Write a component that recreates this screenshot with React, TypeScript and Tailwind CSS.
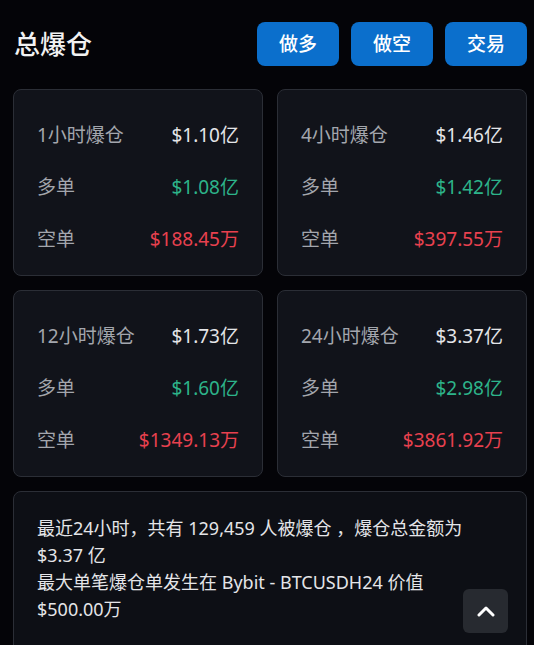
import * as React from 'react';

interface Stat {
    label: string;
    total: string;
    long: string;
    short: string;
}

const stats: Stat[] = [
    { label: '1小时爆仓', total: '$1.10亿', long: '$1.08亿', short: '$188.45万' },
    { label: '4小时爆仓', total: '$1.46亿', long: '$1.42亿', short: '$397.55万' },
    { label: '12小时爆仓', total: '$1.73亿', long: '$1.60亿', short: '$1349.13万' },
    { label: '24小时爆仓', total: '$3.37亿', long: '$2.98亿', short: '$3861.92万' },
];

function StatCard(props: { stat: Stat }) {
    const { stat } = props;

    return (
        <div className="h-[187px] rounded-lg border border-[#2b2e36] bg-[#11131a] px-[23px] pt-[28px] text-[19px]">
            <div className="flex h-[34px] items-center justify-between">
                <span className="text-[#a3a6ad]">{stat.label}</span>
                <span className="text-[#e4e5e8]">{stat.total}</span>
            </div>

            <div className="mt-[18px] flex h-[34px] items-center justify-between">
                <span className="text-[#a3a6ad]">多单</span>
                <span className="text-[#2db48a]">{stat.long}</span>
            </div>

            <div className="mt-[18px] flex h-[34px] items-center justify-between">
                <span className="text-[#a3a6ad]">空单</span>
                <span className="text-[#e8414f]">{stat.short}</span>
            </div>
        </div>
    );
}

export default function App() {
    return (
        <div
            className="relative h-[645px] w-[534px] overflow-hidden bg-[#040408] px-[13px]"
            style={{ fontFamily: '"Noto Sans", "Noto Sans CJK SC", sans-serif' }}
        >
            <div className="-mr-[6px] flex h-[89px] items-center justify-between pb-[1px]">
                <span className="pl-[1px] text-[26px] font-medium text-[#f2f2f2]">总爆仓</span>

                <div className="flex gap-3">
                    {['做多', '做空', '交易'].map((t) => (
                        <button
                            key={t}
                            className="h-[44px] w-[82px] rounded-lg bg-[#0b6fcc] text-[19px] font-medium text-white"
                        >
                            {t}
                        </button>
                    ))}
                </div>
            </div>

            <div className="grid w-[514px] grid-cols-2 gap-x-[14px] gap-y-[14px]">
                {stats.map((s) => (
                    <StatCard stat={s} key={s.label} />
                ))}
            </div>

            <div className="mt-[14px] h-[200px] w-[514px] rounded-lg border border-[#2b2e36] bg-[#0d0f15] px-[23px] pt-[23px] text-[18px] leading-[27px] text-[#e4e5e8]">
                <p>最近24小时，共有 129,459 人被爆仓 ，爆仓总金额为</p>
                <p>$3.37 亿</p>
                <p>最大单笔爆仓单发生在 Bybit - BTCUSDH24 价值</p>
                <p>$500.00万</p>
            </div>

            <button className="absolute left-[463px] top-[589px] flex h-[44px] w-[45px] items-center justify-center rounded-md bg-[#272a30]">
                <svg width="18" height="12" viewBox="0 0 18 12" fill="none">
                    <path d="M2 10 L9 3 L16 10" stroke="white" strokeWidth="3" strokeLinecap="round" strokeLinejoin="round" />
                </svg>
            </button>
        </div>
    );
}
